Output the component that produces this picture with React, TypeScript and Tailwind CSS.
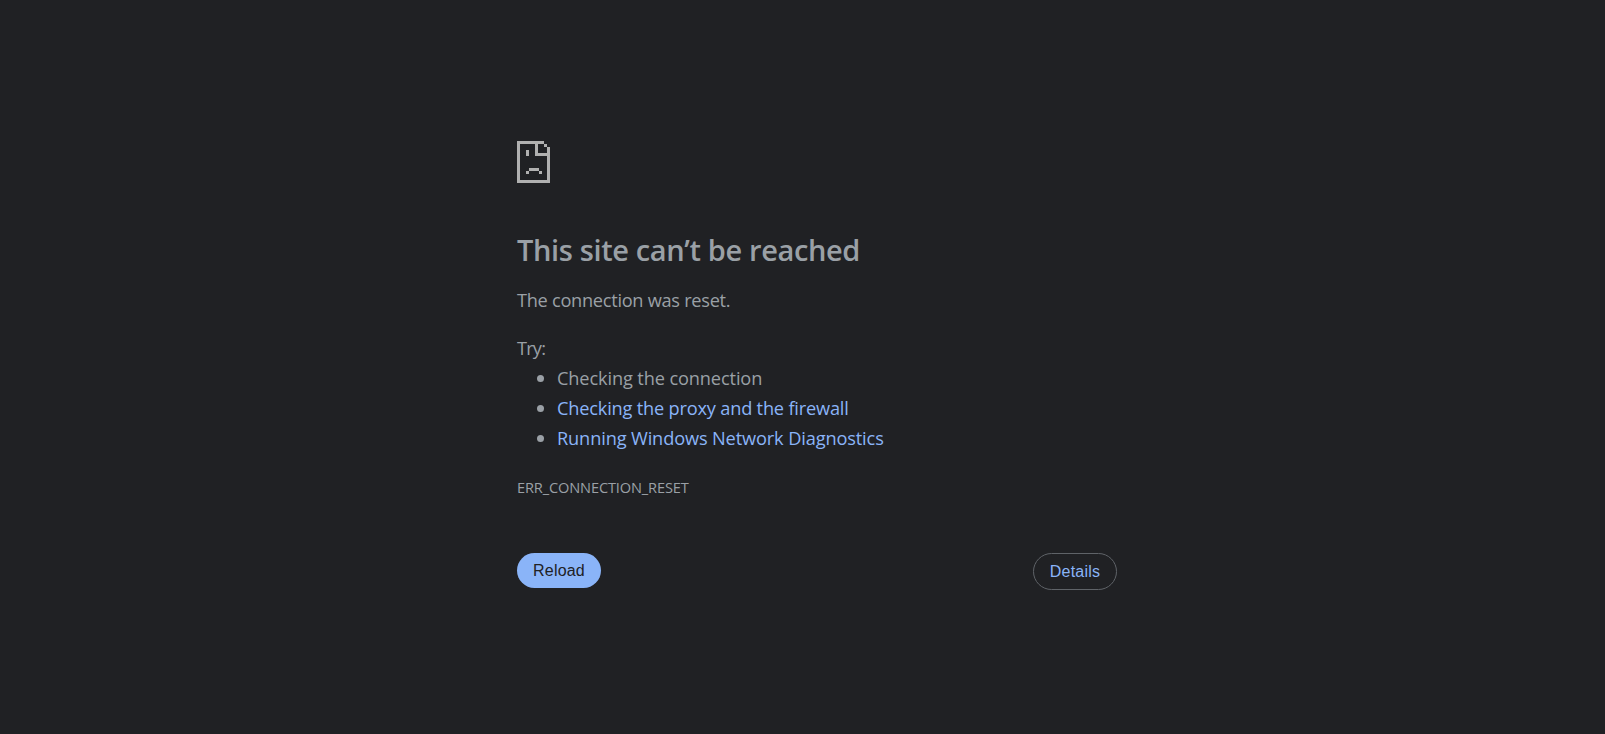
import React from "react";

function SadPageIcon() {
  return (
    <svg width="33" height="42" viewBox="0 0 33 42" shapeRendering="crispEdges" className="block fill-[#b0b0b0]">
      <path d="M0 0h27v3H3v36h27V15H18V3h3v9h9V6h3v36H0z" />
      <path d="M27 3h3v3h-3zM9 9h3v6H9zM12 27h10v3H12zM9 30h3v3H9zM22 30h3v3h-3z" />
    </svg>
  );
}

export default function App() {
  return (
    <main className="min-h-screen bg-[#202124] pl-[517px] pt-[141px] font-['Open_Sans',sans-serif] text-[18.2px] leading-[30px] text-[#9aa0a6]">
      <div className="w-[600px]">
        <SadPageIcon />
        <h1 className="mt-[49px] whitespace-nowrap text-[29px] font-semibold leading-[36px] tracking-[-0.37px]">
          This site can’t be reached
        </h1>
        <p className="mt-[17px] tracking-[-0.28px]">The connection was reset.</p>
        <p className="mt-[18px] tracking-[-0.8px]">Try:</p>
        <ul className="list-disc pl-10 marker:text-[18.75px]">
          <li className="tracking-[-0.125px]">Checking the connection</li>
          <li className="tracking-[-0.19px]"><a href="#" className="text-[#8ab4f8]">Checking the proxy and the firewall</a></li>
          <li className="tracking-[-0.13px]"><a href="#" className="text-[#8ab4f8]">Running Windows Network Diagnostics</a></li>
        </ul>
        <div className="mt-[22px] text-[14.6px] leading-6 tracking-[-0.14px]">ERR_CONNECTION_RESET</div>
        <div className="mt-[54px] flex items-start justify-between font-['Liberation_Sans',sans-serif] text-base tracking-[0.2px]">
          <button className="h-[35px] w-[84px] rounded-full bg-[#8ab4f8] text-[#202124]">Reload</button>
          <button className="h-[37px] w-[84px] rounded-full border border-[#5f6368] text-[#8ab4f8]">Details</button>
        </div>
      </div>
    </main>
  );
}
